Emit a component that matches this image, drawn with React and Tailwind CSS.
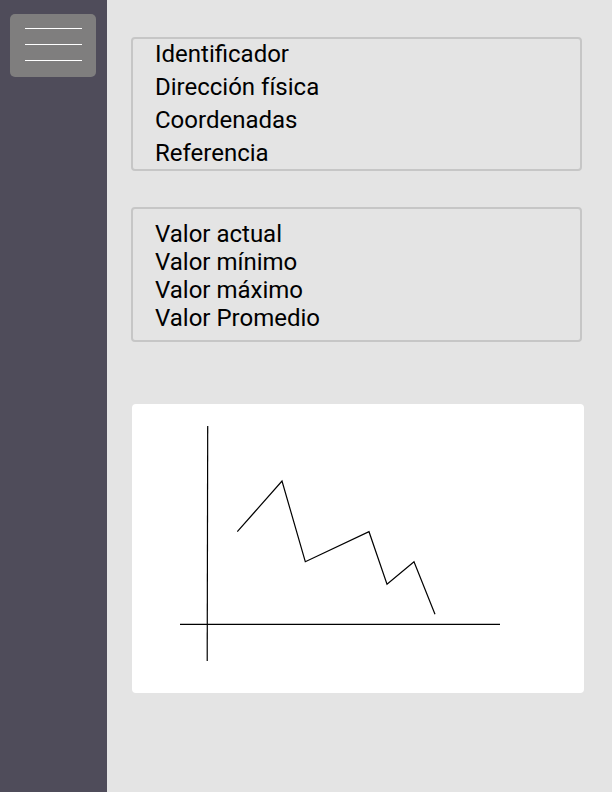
export default function App() {
  const pts = [
    [237.3, 531.7], [282, 481], [305.3, 561.7], [369, 531.7], [387, 584.3], [414, 561.7], [435, 614.3],
  ].map(([x, y]) => `${x - 132},${y - 404}`).join(" ");
  return (
    <div className="flex w-[612px] h-[792px] bg-[#e4e4e4] font-['Roboto',sans-serif] text-black overflow-hidden">
      <div className="w-[107px] shrink-0 bg-[#4f4c5a] pt-[14px] pl-[10px]">
        <div className="w-[86px] h-[63px] rounded-[5px] bg-[#7f7e7e] flex flex-col items-center pt-[14px] gap-[15px]">
          <div className="w-[57px] h-px bg-white" />
          <div className="w-[57px] h-px bg-white" />
          <div className="w-[57px] h-px bg-white" />
        </div>
      </div>
      <div className="flex-1 pl-[24px] pt-[37px]">
        <div className="w-[451px] h-[134px] border-2 border-[#c6c6c6] rounded-[4px] pl-[22px] text-[24px] leading-[33px]">
          <div className="-mt-px">
            <div>Identificador</div>
            <div>Dirección física</div>
            <div>Coordenadas</div>
            <div>Referencia</div>
          </div>
        </div>
        <div className="mt-[36px] w-[451px] h-[135px] border-2 border-[#c6c6c6] rounded-[4px] pl-[22px] pt-[11px] text-[24px] leading-[28px]">
          <div>Valor actual</div>
          <div>Valor mínimo</div>
          <div>Valor máximo</div>
          <div>Valor Promedio</div>
        </div>
        <div className="mt-[62px] ml-px w-[452px] h-[289px] bg-white rounded-[4px]">
          <svg width="452" height="289" viewBox="0 0 452 289" fill="none" stroke="black" strokeWidth="1.2">
            <line x1="75.7" y1="22" x2="75.2" y2="257" />
            <line x1="48" y1="220.3" x2="368" y2="220.3" />
            <polyline points={pts} />
          </svg>
        </div>
      </div>
    </div>
  );
}
